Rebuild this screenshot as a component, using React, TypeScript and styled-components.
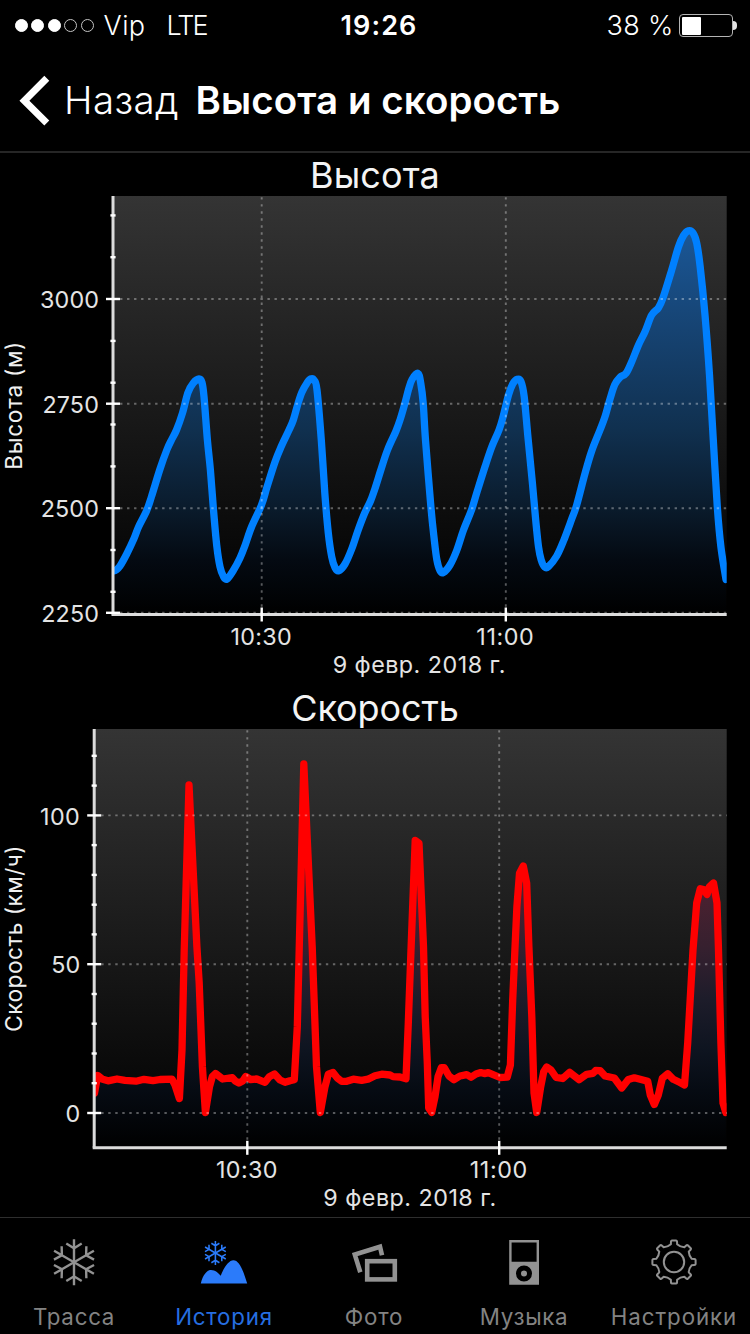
import React from 'react';
import styled, { createGlobalStyle } from 'styled-components';

const GlobalStyle = createGlobalStyle`
  * { box-sizing: border-box; }
  body { margin: 0; background: #000; }
`;

const fontStack = "Inter, 'Liberation Sans', sans-serif";

const Screen = styled.div`
  display: flex;
  flex-direction: column;
  width: 750px;
  height: 1334px;
  overflow: hidden;
  background: #000;
  color: #fff;
  font-family: ${fontStack};
  white-space: pre;
`;

/* ---------- status bar ---------- */

const StatusBar = styled.header`
  display: grid;
  grid-template-columns: 1fr auto 1fr;
  align-items: center;
  height: 50px;
  padding: 2px 13px 0 15px;
  font-size: 27px;
  font-weight: 330;
  line-height: 48px;
`;

const StatusGroup = styled.div<{ $end?: boolean }>`
  display: flex;
  align-items: center;
  justify-content: ${(p) => (p.$end ? 'flex-end' : 'flex-start')};
`;

const Signal = styled.div`
  display: flex;
  gap: 3.4px;
  margin: 0 10px 1px 0;
`;

const Dot = styled.span<{ $on: boolean }>`
  width: 13px;
  height: 13px;
  border-radius: 50%;
  border: 1.4px solid ${(p) => (p.$on ? '#fff' : '#c4c4c4')};
  background: ${(p) => (p.$on ? '#fff' : 'transparent')};
`;

const StatusText = styled.span<{ $spacing?: number; $gap?: number }>`
  letter-spacing: ${(p) => p.$spacing ?? 0}px;
  margin-right: ${(p) => p.$gap ?? 0}px;
`;

const Clock = styled.span`
  padding-left: 6px;
  font-weight: 600;
  letter-spacing: 1.1px;
`;

const Battery = styled.div`
  display: flex;
  align-items: center;
  margin-bottom: 1px;
`;

const BatteryShell = styled.div`
  width: 54px;
  height: 23px;
  padding: 1.5px;
  border: 1.5px solid #b4b4b4;
  border-radius: 4px;
`;

const BatteryLevel = styled.div`
  width: 19px;
  height: 100%;
  border-radius: 1px;
  background: #fff;
`;

const BatteryCap = styled.div`
  width: 4px;
  height: 9px;
  border-radius: 0 4px 4px 0;
  background: #e4e4e4;
`;

/* ---------- navigation bar ---------- */

const NavBar = styled.nav`
  display: flex;
  align-items: center;
  height: 103px;
  padding-left: 18px;
  border-bottom: 2px solid #262626;
  font-size: 38.5px;
  line-height: 101px;
`;

const BackButton = styled.a`
  display: flex;
  align-items: center;
  color: #fff;
  font-weight: 340;
  letter-spacing: 0.4px;
`;

const NavTitle = styled.h1`
  margin: 0 0 0 16.6px;
  font-size: inherit;
  font-weight: 600;
  letter-spacing: 0.06px;
`;

/* ---------- charts ---------- */

const ChartSection = styled.section<{ $height: number }>`
  display: flex;
  flex-direction: column;
  height: ${(p) => p.$height}px;
`;

const ChartTitle = styled.h2<{ $spacing: number }>`
  margin: 0;
  height: 43px;
  line-height: 45px;
  text-align: center;
  font-size: 36px;
  font-weight: 380;
  letter-spacing: ${(p) => p.$spacing}px;
  color: #f4f4f4;
`;

const Plot = styled.svg`
  display: block;
  font-family: ${fontStack};
`;

const AxisLabel = styled.text<{ $spacing?: number }>`
  font-size: 23.3px;
  letter-spacing: ${(p) => p.$spacing ?? 0}px;
  fill: #e4e4e4;
`;

const AxisTitle = styled.text<{ $spacing: number }>`
  font-size: 22.6px;
  letter-spacing: ${(p) => p.$spacing}px;
  text-anchor: middle;
  fill: #f0f0f0;
`;

interface Tick {
  label: string;
  at: number;
  spacing?: number;
}

interface ChartProps {
  id: string;
  title: string;
  titleSpacing: number;
  sectionHeight: number;
  top: number;
  left: number;
  bottom: number;
  color: string;
  fillStops: [number, string][];
  yTicks: Tick[];
  minorTicks: number[];
  xTicks: Tick[];
  yTitle: string;
  yTitleSpacing: number;
  yTitleCenter: number;
  dateCenter: number;
  points: string;
  curve: number;
}

const RIGHT = 726.7;

/* Cardinal spline through the samples; a tension of 0 gives straight segments. */
function linePath(pts: number[][], tension: number) {
  let d = `M${pts[0][0]} ${pts[0][1]}`;
  for (let i = 0; i < pts.length - 1; i++) {
    const a = pts[Math.max(i - 1, 0)];
    const b = pts[i];
    const c = pts[i + 1];
    const e = pts[Math.min(i + 2, pts.length - 1)];
    const k = tension / 6;
    const c1 = [b[0] + (c[0] - a[0]) * k, b[1] + (c[1] - a[1]) * k];
    const c2 = [c[0] - (e[0] - b[0]) * k, c[1] - (e[1] - b[1]) * k];
    d += `C${c1.map((n) => n.toFixed(2)).join(' ')} ${c2.map((n) => n.toFixed(2)).join(' ')} ${c[0]} ${c[1]}`;
  }
  return d;
}

function Chart(p: ChartProps) {
  const height = p.sectionHeight - 43;
  const pts = p.points.trim().split(/\s+/).map((s) => s.split(',').map(Number));
  const line = linePath(pts, p.curve);
  const area = `${line}L${pts[pts.length - 1][0]} ${p.bottom}L${pts[0][0]} ${p.bottom}Z`;
  return (
    <ChartSection $height={p.sectionHeight}>
      <ChartTitle $spacing={p.titleSpacing}>{p.title}</ChartTitle>
      <Plot width={750} height={height} viewBox={`0 ${p.top} 750 ${height}`}>
        <defs>
          <linearGradient id={`${p.id}-bg`} x1="0" y1="0" x2="0" y2="1">
            <stop offset="0" stopColor="#343434" />
            <stop offset="1" stopColor="#000" />
          </linearGradient>
          <linearGradient id={`${p.id}-fill`} gradientUnits="userSpaceOnUse" x1="0" y1={p.top} x2="0" y2={p.bottom}>
            {p.fillStops.map(([y, c]) => (
              <stop key={y} offset={(y - p.top) / (p.bottom - p.top)} stopColor={c} />
            ))}
          </linearGradient>
          <clipPath id={`${p.id}-clip`}>
            <rect x={p.left} y={p.top} width={RIGHT - p.left} height={p.bottom - p.top} />
          </clipPath>
        </defs>

        <rect x={p.left} y={p.top} width={RIGHT - p.left} height={p.bottom - p.top} fill={`url(#${p.id}-bg)`} />
        <g clipPath={`url(#${p.id}-clip)`}>
          <path d={area} fill={`url(#${p.id}-fill)`} />
          <path
            d={line}
            fill="none"
            stroke={p.color}
            strokeWidth={7.3}
            strokeLinejoin="round"
            strokeLinecap="round"
          />
        </g>

        <g stroke="#fff" strokeOpacity={0.34} strokeWidth={1.9} strokeDasharray="2.4 4.62">
          {p.yTicks.map((t) => (
            <line key={t.label} x1={p.left} x2={RIGHT} y1={t.at} y2={t.at} />
          ))}
          {p.xTicks.map((t) => (
            <line key={t.label} x1={t.at} x2={t.at} y1={p.top + 1.2} y2={p.bottom} />
          ))}
        </g>

        <g stroke="#dcdcdc" strokeWidth={3}>
          <line x1={p.left} x2={p.left} y1={p.top} y2={p.bottom} />
          <line x1={p.left - 1.5} x2={RIGHT} y1={p.bottom} y2={p.bottom} />
        </g>
        <g stroke="#fff" strokeWidth={2.4}>
          {p.minorTicks.map((y) => (
            <line key={y} x1={p.left - 2.6} x2={p.left + 2.6} y1={y} y2={y} />
          ))}
          {p.yTicks.map((t) => (
            <line key={t.label} x1={p.left - 7} x2={p.left + 7} y1={t.at} y2={t.at} />
          ))}
          {p.xTicks.map((t) => (
            <line key={t.label} x1={t.at} x2={t.at} y1={p.bottom - 7} y2={p.bottom + 7} />
          ))}
        </g>

        {p.yTicks.map((t) => (
          <AxisLabel key={t.label} $spacing={t.spacing} x={p.left - 14} y={t.at + 9.2} textAnchor="end">
            {t.label}
          </AxisLabel>
        ))}
        {p.xTicks.map((t) => (
          <AxisLabel key={t.label} $spacing={t.spacing} x={t.at - 0.4} y={p.bottom + 30.2} textAnchor="middle">
            {t.label}
          </AxisLabel>
        ))}
        <AxisLabel $spacing={0.48} x={p.dateCenter} y={p.bottom + 58.2} textAnchor="middle">
          9 февр. 2018 г.
        </AxisLabel>
        <AxisTitle $spacing={p.yTitleSpacing} transform={`translate(22.4 ${p.yTitleCenter}) rotate(-90)`}>
          {p.yTitle}
        </AxisTitle>
      </Plot>
    </ChartSection>
  );
}

const altitude = `
113,571 116,570 120,566 126.7,554 134,538.5 138.5,527 146.5,511 151.5,496.5 160,469 167,449.5 171.7,439.5 176.5,430
182.5,413 188,392.5 193.3,383 199,379 202,382.5 204,396.7 207.4,440 210.4,470 213.5,510 216.8,546 220,566.7 223.5,576.5
227,579 233,571 240,558 245,545.5 251.5,527 261.5,505 267,487 275,462 281,447 289,430 293.3,420 298,403.5 302,392
307,383 310.5,379 314.2,380.3 317,390 321.3,440 324.8,493 328.3,533 331.7,556.7 335,567.5 338.7,570.7 345,564
351.7,549 358,530.5 364.5,513.5 370.5,501 375.5,487 380.5,471 387.5,450 396,431 400,420 405,403 408.5,389.5 412,379.5
418,373.3 420.7,383 423.2,403 425.5,440 431,508 434.3,540 436.9,560 440,570.5 443.3,572.5 450,565 456.7,550.5
463.5,530 471.5,510 476.7,493 485,466.7 491.7,447 499,430 503,417 508.5,395 512.7,384 517.2,379.3 521,381.5 524.2,396.7
527.9,436.7 532.4,483 535.7,520 538.5,546.7 541.2,560 544.7,567 548.5,566.5 556.7,556 563.5,541 571.7,519 576.7,505
585,473.5 591.7,451 600,430 605,416.7 610,399 614.8,384.5 620,377.3 626,373.3 631.7,361.7 638.5,345 645,331.7
651.7,315 658.5,307.7 663.3,297 671.7,270 678.5,246.7 683.5,235.5 688.5,230.8 692.9,232.8 696.7,243 700.2,267
705,315 709.5,375 713.3,440 717.3,506.7 720.9,546.7 726,579.5`;

const speed = `
94.5,1093 97.7,1075.5 102.7,1079.3 108,1080.8 117,1079 125,1080.3 136,1081.2 144,1079.3 153,1080.7 160,1079.5
172,1079.2 175,1085 179.4,1098.5 182,1050 184.2,950 189,785 196.9,946.7 199.2,983 202.4,1066.7 205.4,1112.5 209.5,1086.7
212.3,1076.7 215.5,1073.5 222.7,1079 232.3,1077.7 235.3,1081 238.9,1083 242.7,1081 245.7,1076.5 250.7,1079.5
256.7,1079 265,1082.3 269.3,1076.7 274.5,1074 280,1080 285,1082.3 290,1080.7 294.3,1079.8 297.3,1026.7 299.2,950
303.8,764 312.2,946.7 316.5,1066.7 320.3,1112.5 325,1086.7 328.3,1074.2 333,1072.5 337.3,1078 341.7,1081.3
346.7,1081.3 353.3,1079.2 361.7,1080.3 368,1079.2 375,1075.8 381.7,1074.2 390,1075 393,1076.6 400,1077 406,1078.7
408.3,1023 411,950 415.2,840.5 419,843.3 423.5,946.7 425.2,1016.7 427.3,1063 428.7,1108 431.7,1112.5 435,1096.7
438,1076.7 441.3,1067.7 444.3,1067.7 449,1076 454,1079.7 460,1076 466.7,1074.7 471,1077.2 476,1074 480.7,1072.6
484.3,1073.6 488.3,1072.6 500,1077.5 507.2,1077.2 510.4,1065 512.7,1000 514.9,950 516.9,906.7 519.5,873.3
523.3,866 526.7,883.3 528.9,946.7 531.8,1016.7 534,1093 536.7,1112.5 540.7,1086.7 543.7,1071.7 546.7,1067 551,1070
556,1077.3 562.7,1078.5 569.7,1072.3 579,1079.7 586.7,1074.3 593,1073.3 595.7,1070.4 600,1070.6 605,1076
614.3,1078 621.7,1088 628.3,1079.5 634.3,1077.8 647.7,1081.3 650.3,1095 654.3,1104.5 658.3,1095 662.3,1078.3
667.7,1073.7 673.3,1079.3 680,1082.5 684.5,1085 687.7,1043 693,950 696.7,903 700.3,888.7 703.5,889.5 707,894.5
709.3,887 713.5,883 717,903 718.4,946.7 720.9,1043 723,1103 725.8,1112.5`;

/* ---------- tab bar ---------- */

const TabBar = styled.footer`
  display: grid;
  grid-template-columns: repeat(5, 150px);
  width: 750px;
  height: 117px;
  border-top: 1px solid #2e2e2e;
`;

const Tab = styled.a<{ $active?: boolean }>`
  display: flex;
  flex-direction: column;
  align-items: center;
  padding: 20px 2px 0 0;
  color: ${(p) => (p.$active ? '#2b7bfa' : '#929292')};
`;

const TabIcon = styled.svg`
  display: block;
  width: 48px;
  height: 48px;
`;

const TabLabel = styled.span<{ $spacing: number }>`
  margin-top: 17px;
  font-size: 22.3px;
  line-height: 28px;
  letter-spacing: ${(p) => p.$spacing}px;
  opacity: 0.9;
`;

function Flake({ cx, cy, scale, stroke }: { cx: number; cy: number; scale: number; stroke: number }) {
  return (
    <g transform={`translate(${cx} ${cy}) scale(${scale})`} fill="none" stroke="currentColor" strokeWidth={stroke}>
      {[0, 60, 120, 180, 240, 300].map((a) => (
        <path key={a} d="M0 0V-23M-7.7 -18.7L0 -14L7.7 -18.7" transform={`rotate(${a})`} />
      ))}
    </g>
  );
}

function gearPath() {
  const at = (r: number, deg: number) => {
    const a = (deg * Math.PI) / 180;
    return `${(24 + r * Math.sin(a)).toFixed(2)} ${(24 - r * Math.cos(a)).toFixed(2)}`;
  };
  let d = '';
  for (let i = 0; i < 8; i++) {
    const c = i * 45;
    d += `${i ? 'L' : 'M'}${at(18, c - 10)}L${at(20.6, c - 8.5)}Q${at(21.7, c - 8)} ${at(21.7, c - 5.5)}`;
    d += `L${at(21.7, c + 5.5)}Q${at(21.7, c + 8)} ${at(20.6, c + 8.5)}L${at(18, c + 10)}`;
    d += `Q${at(16.2, c + 22.5)} ${at(18, c + 35)}`;
  }
  return d + 'Z';
}

const icons = {
  track: <Flake cx={24} cy={24.3} scale={1} stroke={2.4} />,
  history: (
    <>
      <Flake cx={15.4} cy={15} scale={0.52} stroke={3} />
      <path
        fill="currentColor"
        d="M0.8 45.5C3 36.5 7 32 11 32C15 32 18.5 34.8 20.7 37.8C24 29 29 22.3 33.4 22.3C39.5 22.3 43.5 33.5 47.2 45.5Z"
      />
    </>
  ),
  photo: (
    <g fill="none" stroke="currentColor" strokeWidth={4.6}>
      <path d="M10.3 34.3L4.8 16.6L30 8.7L32 17.2" />
      <rect x={17.2} y={23.2} width={27.6} height={18.2} />
    </g>
  ),
  music: (
    <>
      <path
        fill="currentColor"
        fillRule="evenodd"
        d="M9.2 2H39V46.7H9.2ZM11.6 4.4V23.7H36.6V4.4ZM24 27.5A8 8 0 1 0 24 43.5A8 8 0 1 0 24 27.5Z"
      />
      <circle cx={24} cy={35.5} r={3} fill="currentColor" />
    </>
  ),
  settings: (
    <g fill="none" stroke="currentColor" strokeWidth={2} strokeLinejoin="round">
      <path d={gearPath()} />
      <circle cx={24} cy={24} r={10.2} />
    </g>
  ),
};

const tabs: { label: string; icon: keyof typeof icons; spacing: number; active?: boolean }[] = [
  { label: 'Трасса', icon: 'track', spacing: 0.75 },
  { label: 'История', icon: 'history', spacing: 0.8, active: true },
  { label: 'Фото', icon: 'photo', spacing: 0.85 },
  { label: 'Музыка', icon: 'music', spacing: 0.65 },
  { label: 'Настройки', icon: 'settings', spacing: 0.92 },
];

export default function App() {
  return (
    <>
      <GlobalStyle />
      <Screen>
        <StatusBar>
          <StatusGroup>
            <Signal>
              {[true, true, true, false, false].map((on, i) => (
                <Dot key={i} $on={on} />
              ))}
            </Signal>
            <StatusText $spacing={0.4} $gap={21}>Vip</StatusText>
            <StatusText $spacing={-1.9}>LTE</StatusText>
          </StatusGroup>
          <Clock>19:26</Clock>
          <StatusGroup $end>
            <StatusText $spacing={0.3} $gap={5.5}>38 %</StatusText>
            <Battery>
              <BatteryShell>
                <BatteryLevel />
              </BatteryShell>
              <BatteryCap />
            </Battery>
          </StatusGroup>
        </StatusBar>

        <NavBar>
          <BackButton>
            <svg width={46} height={52} viewBox="18 74 46 52">
              <path d="M46.8 77.3L24.4 99.7L46.8 122" fill="none" stroke="#fff" strokeWidth={7} />
            </svg>
            Назад
          </BackButton>
          <NavTitle>Высота и скорость</NavTitle>
        </NavBar>

        <Chart
          id="altitude"
          title="Высота"
          titleSpacing={0.1}
          sectionHeight={533}
          top={196}
          left={113}
          bottom={614.5}
          color="#0080ff"
          fillStops={[
            [196, '#1d60a6'],
            [240, '#1a5593'],
            [330, '#164372'],
            [430, '#10304f'],
            [508, '#0a1b2c'],
            [560, '#040a12'],
            [614.5, '#000000'],
          ]}
          yTicks={[
            { label: '3000', at: 299, spacing: 0.1 },
            { label: '2750', at: 403.7, spacing: 0.15 },
            { label: '2500', at: 508.2, spacing: 0.15 },
            { label: '2250', at: 612.8, spacing: 0.1 },
          ]}
          minorTicks={[215.4, 257.2, 340.9, 382.7, 424.5, 466.4, 550, 591.8]}
          xTicks={[
            { label: '10:30', at: 261.7, spacing: 0.35 },
            { label: '11:00', at: 505.8, spacing: 0.6 },
          ]}
          yTitle="Высота (м)"
          yTitleSpacing={0.75}
          yTitleCenter={405.3}
          dateCenter={419.3}
          points={altitude}
          curve={1}
        />

        <Chart
          id="speed"
          title="Скорость"
          titleSpacing={-0.1}
          sectionHeight={531}
          top={729}
          left={94.2}
          bottom={1147.8}
          color="#ff0000"
          fillStops={[
            [729, '#6a2230'],
            [890, '#4c2130'],
            [950, '#35202f'],
            [1000, '#1d1c2a'],
            [1050, '#0e1420'],
            [1090, '#060b13'],
            [1147.8, '#000000'],
          ]}
          yTicks={[
            { label: '100', at: 815.4, spacing: 0.4 },
            { label: '50', at: 964.2 },
            { label: '0', at: 1113 },
          ]}
          minorTicks={[755.8, 785.6, 845.1, 874.9, 904.7, 934.4, 994, 1023.7, 1053.5, 1083.2]}
          xTicks={[
            { label: '10:30', at: 247.3, spacing: 0.35 },
            { label: '11:00', at: 499.2, spacing: 0.6 },
          ]}
          yTitle="Скорость (км/ч)"
          yTitleSpacing={0.5}
          yTitleCenter={938.3}
          dateCenter={410}
          points={speed}
          curve={0}
        />

        <TabBar>
          {tabs.map((t) => (
            <Tab key={t.label} $active={t.active}>
              <TabIcon viewBox="0 0 48 48">{icons[t.icon]}</TabIcon>
              <TabLabel $spacing={t.spacing}>{t.label}</TabLabel>
            </Tab>
          ))}
        </TabBar>
      </Screen>
    </>
  );
}
